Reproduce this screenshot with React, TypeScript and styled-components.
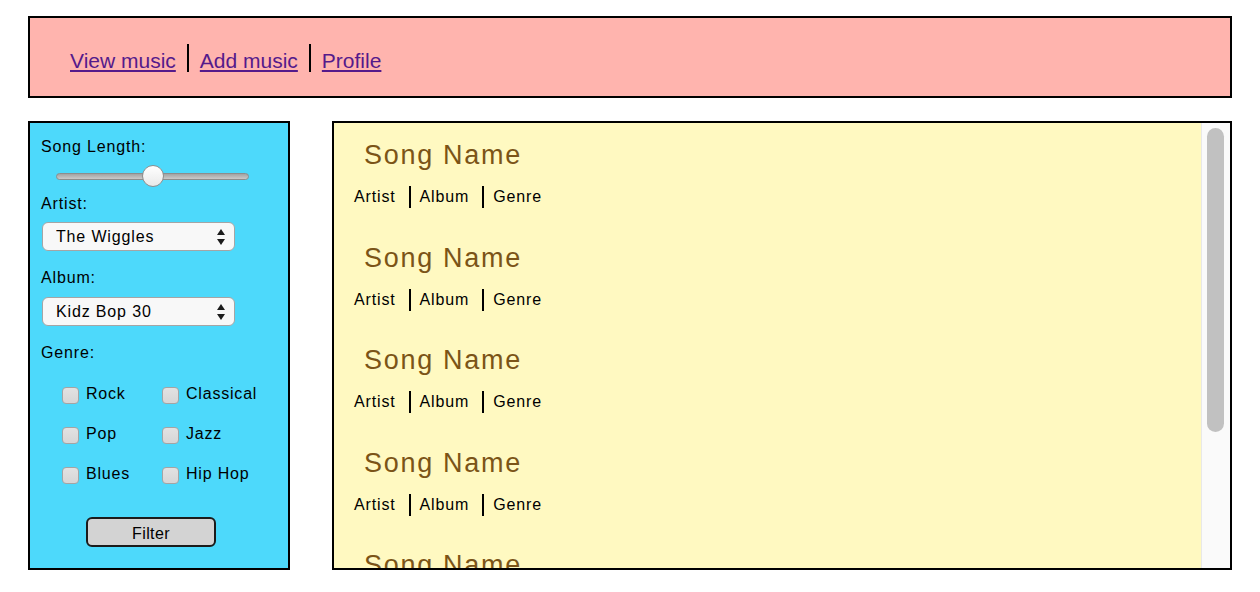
import React from "react";
import styled, { createGlobalStyle } from "styled-components";

const Global = createGlobalStyle`
  html, body { margin: 0; padding: 0; background: #ffffff; }
  body { font-family: "Liberation Sans", Arial, Helvetica, sans-serif; color: #000; }
  *, *::before, *::after { box-sizing: border-box; }
`;

const Page = styled.div`
  width: 1260px;
  padding: 16px 28px 0 28px;
`;

const Header = styled.header`
  height: 82px;
  border: 2px solid #000;
  background: #ffb4ae;
  display: flex;
  align-items: center;
  padding: 2px 0 0 40px;
`;

const NavLink = styled.a`
  font-size: 21px;
  line-height: 28px;
  padding-top: 6px;
  color: #551a8b;
  text-decoration: underline;
  cursor: pointer;
`;

const NavDivider = styled.span`
  width: 2px;
  height: 28px;
  background: #000;
  margin: 0 11px 0 11px;
`;

const Body = styled.div`
  display: flex;
  gap: 42px;
  margin-top: 23px;
`;

const Sidebar = styled.aside`
  width: 262px;
  height: 449px;
  flex: none;
  border: 2px solid #000;
  background: #4dd9fb;
  padding: 15px 0 0 11px;
  display: flex;
  flex-direction: column;
  align-items: flex-start;
`;

const FieldLabel = styled.div<{ $gap: number }>`
  font-size: 16px;
  line-height: 18px;
  letter-spacing: 0.85px;
  margin-top: ${(p) => p.$gap}px;
`;

const Range = styled.input`
  -webkit-appearance: none;
  appearance: none;
  width: 193px;
  height: 22px;
  margin: 9px 0 0 15px;
  padding: 0;
  background: transparent;

  &::-webkit-slider-runnable-track {
    box-sizing: border-box;
    height: 7px;
    border-radius: 4px;
    border: 1px solid #8d8d8d;
    background: linear-gradient(#a3a3a3, #c9c9c9);
  }
  &::-webkit-slider-thumb {
    -webkit-appearance: none;
    box-sizing: border-box;
    width: 22px;
    height: 22px;
    margin-top: -8.5px;
    border-radius: 50%;
    border: 1px solid #8e8e8e;
    background: linear-gradient(#ffffff, #e9e9e9);
  }
`;

const SelectWrap = styled.div<{ $gap: number }>`
  position: relative;
  width: 193px;
  height: 29px;
  margin: ${(p) => p.$gap}px 0 0 1px;
`;

const Select = styled.select`
  -webkit-appearance: none;
  appearance: none;
  width: 100%;
  height: 100%;
  border: 1.5px solid #a5a5a5;
  border-radius: 6px;
  background: #f8f8f8;
  font-family: "Liberation Sans", Arial, sans-serif;
  font-size: 16px;
  letter-spacing: 0.85px;
  color: #000;
  padding: 0 0 0 13px;
  outline: none;
`;

const SelectArrows = styled.svg`
  position: absolute;
  right: 10px;
  top: 7px;
  pointer-events: none;
`;

const GenreGrid = styled.div`
  display: grid;
  grid-template-columns: 100px 100px;
  grid-auto-rows: 40px;
  margin: 12px 0 0 21px;
`;

const CheckLabel = styled.label`
  display: flex;
  align-items: center;
  gap: 7px;
  font-size: 16px;
  letter-spacing: 0.8px;
  white-space: nowrap;
`;

const Check = styled.input`
  -webkit-appearance: none;
  appearance: none;
  width: 17px;
  height: 17px;
  margin: 2px 0 0 0;
  border: 1px solid #a4a4a4;
  border-radius: 4px;
  background: linear-gradient(#e2e2e2, #d6d6d6);
  flex: none;
`;

const FilterButton = styled.button`
  width: 130px;
  height: 30px;
  margin: 23px 0 0 45px;
  border: 2px solid #1b1b1b;
  border-radius: 6px;
  background: #d3d3d3;
  font-family: "Liberation Sans", Arial, sans-serif;
  font-size: 16px;
  letter-spacing: 0.4px;
  color: #000;
  padding: 3px 0 0 0;
`;

const Main = styled.main`
  width: 900px;
  height: 449px;
  flex: none;
  border: 2px solid #000;
  background: #fff9c1;
  display: flex;
`;

const SongList = styled.div`
  flex: 1;
  height: 100%;
  overflow: hidden;
  padding-top: 17px;
`;

const ScrollTrack = styled.div`
  width: 29px;
  flex: none;
  height: 100%;
  background: #fafafa;
  border-left: 1px solid #e8e8e8;
  padding: 5px 6px 0 5px;
`;

const ScrollThumb = styled.div`
  width: 17px;
  height: 304px;
  border-radius: 9px;
  background: #c1c1c1;
`;

const Song = styled.div`
  height: 102.5px;
`;

const SongTitle = styled.div`
  font-size: 27px;
  line-height: 31px;
  letter-spacing: 1.7px;
  color: #7b5417;
  padding-left: 30px;
  white-space: nowrap;
`;

const Meta = styled.div`
  display: flex;
  align-items: center;
  height: 22px;
  margin-top: 15px;
  padding-left: 20px;
  font-size: 16px;
  letter-spacing: 0.85px;
`;

const MetaDivider = styled.span`
  width: 2px;
  height: 22px;
  background: #000;
  margin: 0 9px 0 13px;
`;

const Arrows = () => (
  <SelectArrows width="8" height="16" viewBox="0 0 8 16">
    <polygon points="4,0 8,6 0,6" fill="#1c1c1c" />
    <polygon points="0,10 8,10 4,16" fill="#1c1c1c" />
  </SelectArrows>
);

const genres = ["Rock", "Classical", "Pop", "Jazz", "Blues", "Hip Hop"];
const songs = [1, 2, 3, 4, 5, 6];

export default function App() {
  return (
    <>
      <Global />
      <Page>
        <Header>
          <NavLink>View music</NavLink>
          <NavDivider />
          <NavLink>Add music</NavLink>
          <NavDivider />
          <NavLink>Profile</NavLink>
        </Header>
        <Body>
          <Sidebar>
            <FieldLabel $gap={0}>Song Length:</FieldLabel>
            <Range type="range" min={0} max={100} defaultValue={50} />
            <FieldLabel $gap={8}>Artist:</FieldLabel>
            <SelectWrap $gap={9}>
              <Select defaultValue="The Wiggles">
                <option>The Wiggles</option>
              </Select>
              <Arrows />
            </SelectWrap>
            <FieldLabel $gap={18}>Album:</FieldLabel>
            <SelectWrap $gap={10}>
              <Select defaultValue="Kidz Bop 30">
                <option>Kidz Bop 30</option>
              </Select>
              <Arrows />
            </SelectWrap>
            <FieldLabel $gap={18}>Genre:</FieldLabel>
            <GenreGrid>
              {genres.map((g) => (
                <CheckLabel key={g}>
                  <Check type="checkbox" />
                  {g}
                </CheckLabel>
              ))}
            </GenreGrid>
            <FilterButton>Filter</FilterButton>
          </Sidebar>
          <Main>
            <SongList>
              {songs.map((s) => (
                <Song key={s}>
                  <SongTitle>Song Name</SongTitle>
                  <Meta>
                    <span>Artist</span>
                    <MetaDivider />
                    <span>Album</span>
                    <MetaDivider />
                    <span>Genre</span>
                  </Meta>
                </Song>
              ))}
            </SongList>
            <ScrollTrack>
              <ScrollThumb />
            </ScrollTrack>
          </Main>
        </Body>
      </Page>
    </>
  );
}
